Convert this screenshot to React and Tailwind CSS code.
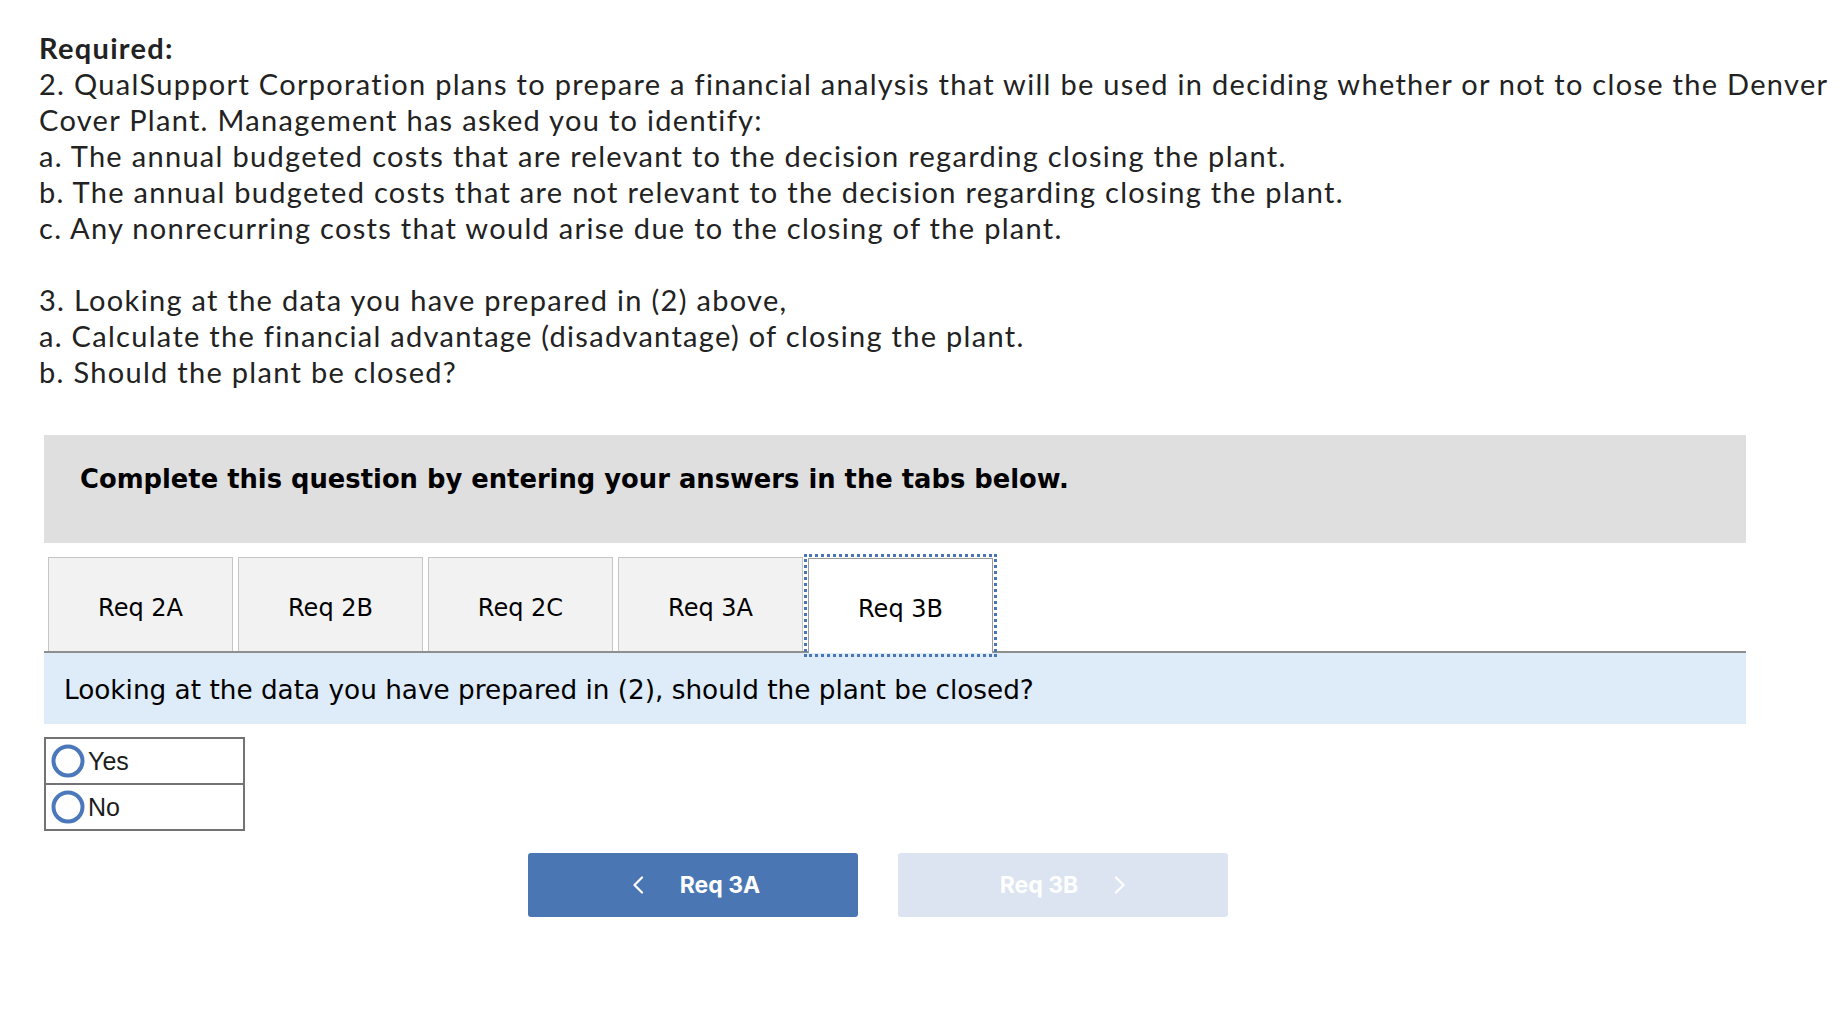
import React from "react";

function Radio({ label }) {
  return (
    <div className="flex h-[44px] items-center">
      <svg width="34" height="34" viewBox="0 0 34 34" className="ml-[5px] shrink-0">
        <circle cx="17" cy="17" r="14.5" fill="white" stroke="#4b78ba" strokeWidth="4" />
      </svg>
      <span className="ml-[3px] font-['Liberation_Sans',Arial,sans-serif] text-[25px] leading-none text-[#1c1c1c]">
        {label}
      </span>
    </div>
  );
}

function Chevron({ dir, color }) {
  return (
    <svg width="12" height="18" viewBox="0 0 12 18" className="shrink-0">
      {dir === "left" ? (
        <path d="M10 1.5 L2.5 9 L10 16.5" fill="none" stroke={color} strokeWidth="2.2" strokeLinecap="round" strokeLinejoin="round" />
      ) : (
        <path d="M2 1.5 L9.5 9 L2 16.5" fill="none" stroke={color} strokeWidth="2.2" strokeLinecap="round" strokeLinejoin="round" />
      )}
    </svg>
  );
}

export default function App() {
  const tabs = ["Req 2A", "Req 2B", "Req 2C", "Req 3A"];
  return (
    <div className="min-h-screen bg-white">
      <div className="pt-[30px] pl-[39px] font-['Lato',sans-serif] text-[29px] leading-[36px] tracking-[1.3px] text-[#222222]">
        <p className="font-bold">Required:</p>
        <p>
          2. QualSupport Corporation plans to prepare a financial analysis that will be used in deciding whether or not to close the Denver
          <br />
          Cover Plant. Management has asked you to identify:
        </p>
        <p>a. The annual budgeted costs that are relevant to the decision regarding closing the plant.</p>
        <p>b. The annual budgeted costs that are not relevant to the decision regarding closing the plant.</p>
        <p>c. Any nonrecurring costs that would arise due to the closing of the plant.</p>
        <p className="h-[36px]"></p>
        <p>3. Looking at the data you have prepared in (2) above,</p>
        <p>a. Calculate the financial advantage (disadvantage) of closing the plant.</p>
        <p>b. Should the plant be closed?</p>
      </div>

      <div className="ml-[44px] mt-[45px] w-[1702px]">
        <div className="h-[108px] bg-[#dfdfdf] pl-[36px] pt-[28px]">
          <p className="font-['DejaVu_Sans',Verdana,sans-serif] text-[25.8px] font-bold leading-[33px] text-black">
            Complete this question by entering your answers in the tabs below.
          </p>
        </div>

        <div className="mt-[14px] flex items-end gap-[5px] border-b-2 border-[#8e8e8e] pl-[4px]">
          {tabs.map((t) => (
            <div
              key={t}
              className="flex h-[94px] w-[185px] items-center justify-center border border-b-0 border-[#c6c6c6] bg-[#f2f2f2] pt-[7px] font-['DejaVu_Sans',Verdana,sans-serif] text-[24px] text-black"
            >
              {t}
            </div>
          ))}
          <div className="relative -mb-[2px] flex h-[95px] w-[185px] items-center justify-center border border-b-0 border-[#9a9a9a] bg-white pt-[5px] font-['DejaVu_Sans',Verdana,sans-serif] text-[24px] text-black outline-[3px] outline-offset-[1px] outline-dotted outline-[#4a76b8]">
            Req 3B
          </div>
        </div>

        <div className="flex h-[71px] items-center bg-[#deebf8] pl-[20px] pt-[4px] font-['DejaVu_Sans',Verdana,sans-serif] text-[26.3px] text-black">
          Looking at the data you have prepared in (2), should the plant be closed?
        </div>

        <div className="mt-[13px] w-[201px] border-2 border-[#737373]">
          <Radio label="Yes" />
          <div className="border-t-2 border-[#737373]">
            <Radio label="No" />
          </div>
        </div>

        <div className="ml-[484px] mt-[22px] flex gap-[40px] font-['Inter',sans-serif]">
          <button className="flex h-[64px] w-[330px] items-center justify-center gap-[36px] rounded-[3px] bg-[#4a76b4] pl-[6px] text-[23px] font-bold text-white">
            <Chevron dir="left" color="#ffffff" />
            <span>Req 3A</span>
          </button>
          <button className="flex h-[64px] w-[330px] items-center justify-center gap-[36px] rounded-[3px] bg-[#dbe4f0] text-[23px] font-bold text-white">
            <span>Req 3B</span>
            <Chevron dir="right" color="#ffffff" />
          </button>
        </div>
      </div>
    </div>
  );
}
